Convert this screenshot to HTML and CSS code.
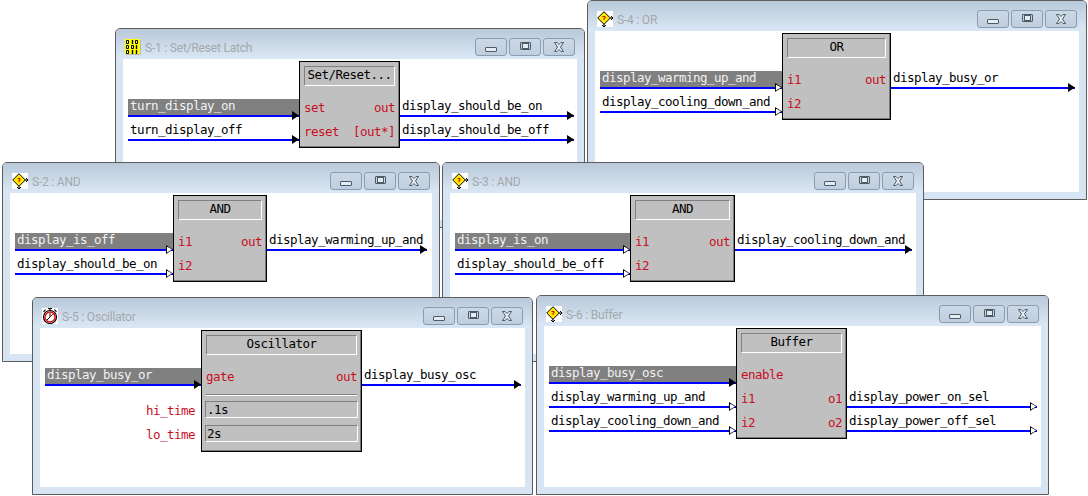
FILE: index.html
```html
<!DOCTYPE html>
<html lang="en">
<head>
<meta charset="utf-8">
<title>Function blocks</title>
<link rel="stylesheet" href="styles.css">
</head>
<body>
<svg class="defs" width="0" height="0" aria-hidden="true">
  <symbol id="ic-decision" viewBox="0 0 16 16">
    <rect width="16" height="16" fill="#fff"/>
    <path d="M7 .7 13.300 7 7 13.300 .7 7Z" fill="#ffe800" stroke="#000"/>
    <path d="M5.500 5.500h2.500v1.500h-1v2" fill="none" stroke="#e00000"/>
    <path d="M13 7h3M14 5l2 2-2 2M7 13v3M5 14l2 2 2-2" fill="none" stroke="#000"/>
  </symbol>
  <symbol id="ic-latch" viewBox="0 0 16 16">
    <rect width="15" height="15" fill="#ffff00"/>
    <path d="M1.500 1.500h2v3h-2zM10.500 1.500h2v3h-2zM1.500 6.500h2v3h-2zM6.500 6.500h2v3h-2zM1.500 11.500h2v3h-2z" fill="none" stroke="#000"/>
    <path d="M7.500 1v4M11.500 6v4M7.500 11v4M11.500 11v4" stroke="#000" stroke-width="1.400"/>
    <path d="M15.500 1v15M1 15.500h14" stroke="#b9b9b9"/>
  </symbol>
  <symbol id="ic-clock" viewBox="0 0 16 16">
    <rect width="16" height="16" fill="#fff"/>
    <path d="M6 .5h4M8 1v2M1.500 4l2-2.500M14.500 4l-2-2.500" stroke="#000" fill="none" stroke-width="1.200"/>
    <circle cx="8" cy="9" r="6.500" fill="#fff" stroke="#000" stroke-width="1.200"/>
    <circle cx="8" cy="9" r="5" fill="none" stroke="#e01010" stroke-width="1.500"/>
    <path d="M8 5v4l-3 3" fill="none" stroke="#000"/>
    <path d="M8 9l3-3" stroke="#e01010"/>
  </symbol>
  <symbol id="ic-close" viewBox="0 0 12 10">
    <path d="M1.500 .5h2.500l2 2 2-2h2.500l-3 4.500 3 4.500h-2.500l-2-2-2 2h-2.500l3-4.500z" fill="#e4ebf3" stroke="#4e5a66"/>
  </symbol>
</svg>

<section class="win s1">
  <header class="bar"><svg class="icon"><use href="#ic-latch"/></svg><span class="name">S-1 : Set/Reset Latch</span><span class="btn"><i class="min"></i></span><span class="btn"><i class="max"></i></span><span class="btn"><svg class="x"><use href="#ic-close"/></svg></span></header>
  <div class="client">
    <div class="col in-171">
      <div class="sig hot tip">turn_display_on</div>
      <div class="sig tip">turn_display_off</div>
    </div>
    <div class="block b-101">
      <div class="head">Set/Reset...</div>
      <div class="port"><span>set</span><span>out</span></div>
      <div class="port"><span>reset</span><span>[out*]</span></div>
    </div>
    <div class="col out-174">
      <div class="sig tip">display_should_be_on</div>
      <div class="sig tip">display_should_be_off</div>
    </div>
  </div>
</section>

<section class="win s4">
  <header class="bar"><svg class="icon"><use href="#ic-decision"/></svg><span class="name">S-4 : OR</span><span class="btn"><i class="min"></i></span><span class="btn"><i class="max"></i></span><span class="btn"><svg class="x"><use href="#ic-close"/></svg></span></header>
  <div class="client">
    <div class="col in-182">
      <div class="sig hot open">display_warming_up_and</div>
      <div class="sig open">display_cooling_down_and</div>
    </div>
    <div class="block b-109">
      <div class="head">OR</div>
      <div class="port"><span>i1</span><span>out</span></div>
      <div class="port"><span>i2</span></div>
    </div>
    <div class="col out-184">
      <div class="sig tip">display_busy_or</div>
    </div>
  </div>
</section>

<section class="win s2">
  <header class="bar"><svg class="icon"><use href="#ic-decision"/></svg><span class="name">S-2 : AND</span><span class="btn"><i class="min"></i></span><span class="btn"><i class="max"></i></span><span class="btn"><svg class="x"><use href="#ic-close"/></svg></span></header>
  <div class="client">
    <div class="col in-158">
      <div class="sig hot open">display_is_off</div>
      <div class="sig open">display_should_be_on</div>
    </div>
    <div class="block b-94">
      <div class="head">AND</div>
      <div class="port"><span>i1</span><span>out</span></div>
      <div class="port"><span>i2</span></div>
    </div>
    <div class="col out-160">
      <div class="sig tip">display_warming_up_and</div>
    </div>
  </div>
</section>

<section class="win s3">
  <header class="bar"><svg class="icon"><use href="#ic-decision"/></svg><span class="name">S-3 : AND</span><span class="btn"><i class="min"></i></span><span class="btn"><i class="max"></i></span><span class="btn"><svg class="x"><use href="#ic-close"/></svg></span></header>
  <div class="client">
    <div class="col in-175">
      <div class="sig hot open">display_is_on</div>
      <div class="sig open">display_should_be_off</div>
    </div>
    <div class="block b-105">
      <div class="head">AND</div>
      <div class="port"><span>i1</span><span>out</span></div>
      <div class="port"><span>i2</span></div>
    </div>
    <div class="col out-177">
      <div class="sig tip">display_cooling_down_and</div>
    </div>
  </div>
</section>

<section class="win s5">
  <header class="bar"><svg class="icon"><use href="#ic-clock"/></svg><span class="name">S-5 : Oscillator</span><span class="btn"><i class="min"></i></span><span class="btn"><i class="max"></i></span><span class="btn"><svg class="x"><use href="#ic-close"/></svg></span></header>
  <div class="client">
    <div class="col in-156">
      <div class="sig hot tip">display_busy_or</div>
      <div class="param first">hi_time</div>
      <div class="param">lo_time</div>
    </div>
    <div class="block b-161">
      <div class="head">Oscillator</div>
      <div class="port"><span>gate</span><span>out</span></div>
      <div class="rule"></div>
      <div class="field">.1s</div>
      <div class="field">2s</div>
    </div>
    <div class="col out-159">
      <div class="sig tip">display_busy_osc</div>
    </div>
  </div>
</section>

<section class="win s6">
  <header class="bar"><svg class="icon"><use href="#ic-decision"/></svg><span class="name">S-6 : Buffer</span><span class="btn"><i class="min"></i></span><span class="btn"><i class="max"></i></span><span class="btn"><svg class="x"><use href="#ic-close"/></svg></span></header>
  <div class="client">
    <div class="col in-187">
      <div class="sig hot tip">display_busy_osc</div>
      <div class="sig open">display_warming_up_and</div>
      <div class="sig open">display_cooling_down_and</div>
    </div>
    <div class="block b-111">
      <div class="head">Buffer</div>
      <div class="port"><span>enable</span></div>
      <div class="port"><span>i1</span><span>o1</span></div>
      <div class="port"><span>i2</span><span>o2</span></div>
    </div>
    <div class="col out-190 skip">
      <div class="sig open">display_power_on_sel</div>
      <div class="sig open">display_power_off_sel</div>
    </div>
  </div>
</section>
</body>
</html>
```
FILE: styles.css
```css
* { box-sizing: border-box; }
html, body { margin: 0; height: 100%; }
body { position: relative; width: 1088px; height: 496px; overflow: hidden; background: #fff; font-family: "DejaVu Sans Mono", "Liberation Mono", monospace; font-size: 12.5px; letter-spacing: -0.53px; color: #000; }
.defs { position: absolute; }

.win { position: absolute; display: flex; flex-direction: column; background: #d7e4f2; border: 1px solid #5c5c5c; border-radius: 5px 5px 0 0; }
.s1 { left: 115px; top: 28px; width: 470px; height: 200px; }
.s2 { left: 2px; top: 162px; width: 438px; height: 200px; }
.s3 { left: 442px; top: 162px; width: 482px; height: 200px; }
.s4 { left: 587px; top: 0; width: 500px; height: 200px; }
.s5 { left: 32px; top: 297px; width: 501px; height: 198px; }
.s6 { left: 536px; top: 295px; width: 513px; height: 200px; }

.bar { flex: none; height: 30px; display: flex; align-items: flex-start; padding: 9px 9px 0 9px; border-radius: 4px 4px 0 0; background: linear-gradient(#b9c9d9, #dbe7f4); }
.icon { flex: none; width: 16px; height: 16px; margin-top: 1px; }
.name { flex: 1; margin-left: 4px; padding-top: 1px; font: 12px/18px Roboto, "Noto Sans", sans-serif; letter-spacing: -0.2px; color: #a3a8ad; white-space: nowrap; }
.btn { flex: none; display: flex; align-items: center; justify-content: center; width: 32px; height: 18px; margin-left: 2px; border: 1px solid #8b9cb0; border-radius: 3px; background: linear-gradient(#ccd8e5, #bfcedf); }
.min { display: block; width: 12px; height: 5px; margin-top: 5px; border: 1px solid #4e5a66; border-radius: 1px; background: #e4ebf3; }
.max { display: flex; align-items: center; justify-content: center; width: 11px; height: 8px; margin-top: -2px; border: 1px solid #4e5a66; border-radius: 1px; background: #c6d3e1; }
.max::after { content: ""; width: 5px; height: 4px; border: 1px solid #4e5a66; background: #e4ebf3; }
.x { width: 12px; height: 10px; margin-top: -1px; }

.client { flex: 1; min-height: 0; display: flex; align-items: flex-start; margin: 0 7px 7px; padding: 2px 0 0 5px; background: #fff; overflow: hidden; }
.col { flex: none; margin-top: 38px; }
.skip { margin-top: 62px; }
.in-156 { width: 156px; } .in-158 { width: 158px; } .in-171 { width: 171px; } .in-175 { width: 175px; } .in-182 { width: 182px; } .in-187 { width: 187px; }
.out-159 { width: 159px; } .out-160 { width: 160px; } .out-174 { width: 174px; } .out-177 { width: 177px; } .out-184 { width: 184px; } .out-190 { width: 190px; }

.sig { position: relative; height: 18px; margin-bottom: 6px; padding-left: 2px; border-bottom: 2px solid #0000ff; line-height: 13px; white-space: nowrap; }
.hot { background: #808080; color: #f2f2f2; }
.sig.tip::after, .sig.open::after, .sig.open::before { content: ""; position: absolute; clip-path: polygon(0 0, 100% 50%, 0 100%); }
.sig.tip::after { right: 0; bottom: -5px; width: 7px; height: 9px; background: #000; }
.sig.open::after { right: 0; bottom: -5px; width: 7px; height: 9px; background: #000; }
.sig.open::before { z-index: 1; right: 1px; bottom: -3.5px; width: 5px; height: 6px; background: #fff; }

.block { flex: none; display: flex; flex-direction: column; padding: 3px; border: 1px solid #000; background: #c0c0c0; box-shadow: inset -1px -1px 0 #7a7a7a; }
.b-94 { width: 94px; } .b-101 { width: 101px; } .b-105 { width: 105px; } .b-109 { width: 109px; } .b-111 { width: 111px; } .b-161 { width: 161px; }
.head { height: 20px; margin: 1px 1px 10px; border: 1px solid; border-color: #808080 #fff #fff #808080; line-height: 15px; text-align: center; }
.port { display: flex; justify-content: space-between; height: 24px; padding: 0 1px; line-height: 24px; color: #c80f1e; }
.rule { height: 2px; margin: 5px 1px 5px; background: linear-gradient(#808080 50%, #fff 50%); }
.field { height: 17px; margin-bottom: 7px; padding-left: 1px; border: 1px solid; border-color: #808080 #fff #fff #808080; line-height: 15px; }
.field:last-child { margin-bottom: 6px; }
.param { height: 24px; padding-right: 6px; text-align: right; line-height: 24px; color: #c80f1e; }
.first { margin-top: 13px; }
```
